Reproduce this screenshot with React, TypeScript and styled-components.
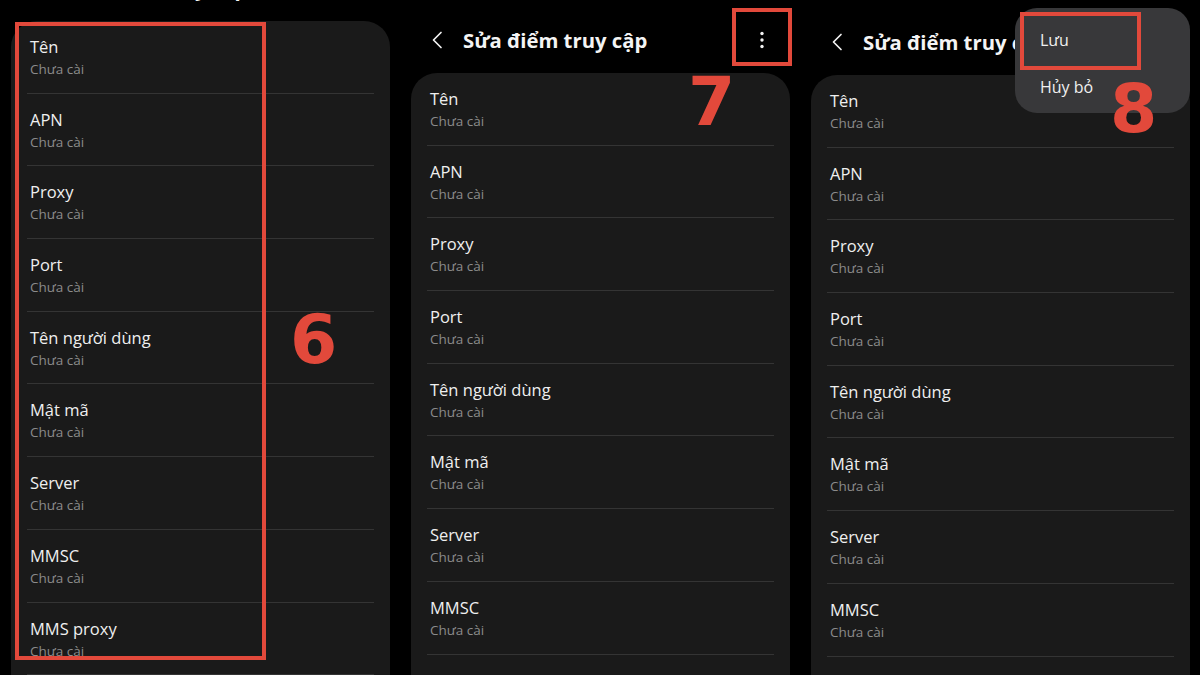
import { FunctionComponent } from "react";
import styled, { createGlobalStyle } from "styled-components";

const RED = "#e2493b";

const GlobalStyle = createGlobalStyle`
  * { box-sizing: border-box; }
  html, body { margin: 0; padding: 0; background: #000; }
  body { font-family: "Open Sans", Roboto, "Noto Sans", sans-serif; }
`;

const FIELDS = [
  "Tên",
  "APN",
  "Proxy",
  "Port",
  "Tên người dùng",
  "Mật mã",
  "Server",
  "MMSC",
  "MMS proxy",
  "Cổng MMS",
];

interface BoxProps {
  $left: number;
  $top: number;
  $width?: number;
  $height?: number;
}

const BackIcon = () => (
  <svg width="12" height="18" viewBox="0 0 12 18">
    <path d="M10 1.5 L2.5 9 L10 16.5" fill="none" stroke="#f2f2f2" strokeWidth="1.7" strokeLinecap="round" strokeLinejoin="round" />
  </svg>
);

const MoreIcon = () => (
  <svg width="6" height="20" viewBox="0 0 6 20">
    <circle cx="3" cy="3.5" r="1.7" fill="#f2f2f2" />
    <circle cx="3" cy="10" r="1.7" fill="#f2f2f2" />
    <circle cx="3" cy="16.5" r="1.7" fill="#f2f2f2" />
  </svg>
);

interface ScreenProps {
  offset: number;
  children?: React.ReactNode;
}

const EditScreen: FunctionComponent<ScreenProps> = ({ offset, children }) => (
  <Screen>
    <Scroll $offset={offset}>
      <Header>
        <BackButton>
          <BackIcon />
        </BackButton>
        <Title>Sửa điểm truy cập</Title>
        <MoreButton>
          <MoreIcon />
        </MoreButton>
      </Header>
      <Card>
        {FIELDS.map((field) => (
          <Row key={field}>
            <RowTitle>{field}</RowTitle>
            <RowValue>Chưa cài</RowValue>
          </Row>
        ))}
      </Card>
    </Scroll>
    {children}
  </Screen>
);

const App = () => (
  <>
    <GlobalStyle />
    <Page>
      <EditScreen offset={-52}>
        <Marker $left={15} $top={22} $width={251} $height={638} />
        <Step $left={290} $top={306}>6</Step>
      </EditScreen>
      <EditScreen offset={0}>
        <Marker $left={332} $top={8} $width={60} $height={58} />
        <Step $left={288} $top={68}>7</Step>
      </EditScreen>
      <EditScreen offset={2}>
        <Popup>
          <MenuItem $marked>Lưu</MenuItem>
          <MenuItem>Hủy bỏ</MenuItem>
        </Popup>
        <Step $left={310} $top={75}>8</Step>
      </EditScreen>
    </Page>
  </>
);

const Page = styled.div`
  display: flex;
  width: 1200px;
  height: 675px;
  overflow: hidden;
  background: #000;
`;

const Screen = styled.div`
  position: relative;
  flex: 0 0 400px;
  height: 675px;
  overflow: hidden;
  padding: 0 10px 0 11px;
`;

const Scroll = styled.div<{ $offset: number }>`
  display: flex;
  flex-direction: column;
  margin-top: ${(p) => p.$offset}px;
`;

const Header = styled.div`
  display: flex;
  align-items: center;
  height: 66px;
  margin-top: 7px;
  padding-left: 20px;
  padding-right: 16px;
`;

const BackButton = styled.div`
  display: flex;
  align-items: center;
  width: 32px;
`;

const Title = styled.div`
  flex: 1;
  color: #f4f4f4;
  font-size: 20.3px;
  font-weight: 700;
`;

const MoreButton = styled.div`
  display: flex;
  align-items: center;
  justify-content: center;
  width: 24px;
  height: 40px;
`;

const Card = styled.div`
  background: #1a1a1a;
  border-radius: 26px;
  padding: 0 16px;
  min-height: 800px;
`;

const Row = styled.div`
  display: flex;
  flex-direction: column;
  height: 72.7px;
  padding: 15px 0 0 3px;
  border-bottom: 1px solid #343434;
`;

const RowTitle = styled.div`
  color: #efefef;
  font-size: 16.5px;
  line-height: 22px;
`;

const RowValue = styled.div`
  margin-top: 2px;
  color: #8b8b8b;
  font-size: 13.5px;
  line-height: 18px;
`;

const Marker = styled.div<BoxProps>`
  position: absolute;
  left: ${(p) => p.$left}px;
  top: ${(p) => p.$top}px;
  width: ${(p) => p.$width}px;
  height: ${(p) => p.$height}px;
  border: 4px solid ${RED};
`;

const Step = styled.div<BoxProps>`
  position: absolute;
  left: ${(p) => p.$left}px;
  top: ${(p) => p.$top}px;
  color: ${RED};
  font-family: "DejaVu Sans", "Open Sans", sans-serif;
  font-size: 68px;
  font-weight: 700;
  line-height: 1;
`;

const Popup = styled.div`
  position: absolute;
  left: 215px;
  top: 8px;
  width: 175px;
  height: 105px;
  padding: 8px 0 0 25px;
  background: #38383a;
  border-radius: 22px;
  display: flex;
  flex-direction: column;
`;

const MenuItem = styled.div<{ $marked?: boolean }>`
  position: relative;
  height: 47px;
  display: flex;
  align-items: center;
  color: #f0f0f0;
  font-size: 16px;

  ${(p) =>
    p.$marked &&
    `
    &::after {
      content: "";
      position: absolute;
      left: -20px;
      top: -4px;
      width: 113px;
      height: 50px;
      border: 4px solid ${RED};
    }
  `}
`;

export default App;
